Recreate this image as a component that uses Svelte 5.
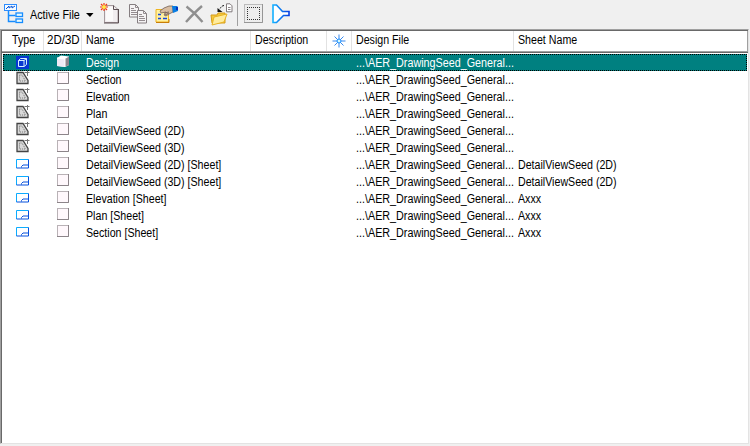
<script>
  const file = '...\\AER_DrawingSeed_General...';
  const rows = [
    { type: 'design', name: 'Design', sheet: '' },
    { type: 'drawing', name: 'Section', sheet: '' },
    { type: 'drawing', name: 'Elevation', sheet: '' },
    { type: 'drawing', name: 'Plan', sheet: '' },
    { type: 'drawing', name: 'DetailViewSeed (2D)', sheet: '' },
    { type: 'drawing', name: 'DetailViewSeed (3D)', sheet: '' },
    { type: 'sheet', name: 'DetailViewSeed (2D) [Sheet]', sheet: 'DetailViewSeed (2D)' },
    { type: 'sheet', name: 'DetailViewSeed (3D) [Sheet]', sheet: 'DetailViewSeed (2D)' },
    { type: 'sheet', name: 'Elevation [Sheet]', sheet: 'Axxx' },
    { type: 'sheet', name: 'Plan [Sheet]', sheet: 'Axxx' },
    { type: 'sheet', name: 'Section [Sheet]', sheet: 'Axxx' }
  ];
</script>

<div class="window">
  <header class="toolbar">
    <svg class="tree" width="22" height="22" viewBox="0 0 22 22" fill="none">
      <path d="M5.500 8v10.500h7M5.500 12.500h7" stroke="#168cff" stroke-width="1.500" />
      <rect x="1.500" y="1.500" width="12" height="6" fill="#f5fbff" stroke="#2b8cff" />
      <path d="M3 6l3-3v2l3-2v2l3-2" stroke="#0754d8" />
      <rect x="13" y="10" width="6.500" height="3.500" fill="#e5faff" stroke="#168cff" stroke-width="1.300" />
      <rect x="13" y="16" width="6.500" height="3.500" fill="#e5faff" stroke="#168cff" stroke-width="1.300" />
    </svg>
    <span class="active"><b>Active File</b></span>
    <svg class="drop" width="8" height="5"><path d="M0 0h7.500L4 4z" fill="#000" /></svg>
    <svg class="new" width="20" height="22" viewBox="0 0 20 22">
      <path d="M4.500 2.500h9l4.500 4v13H4.500z" fill="#f1edef" stroke="#a59a9d" />
      <path d="M6 4h7v14H6z" fill="#fff" opacity=".7" />
      <path d="M13.500 2.500v4H18M18.500 6v14H4" fill="none" stroke="#5c5054" />
      <path d="M4 0v8M0 4h8M1 1l6 6M7 1L1 7" stroke="#f03a18" stroke-width="1.200" />
      <circle cx="4" cy="4" r="2" fill="#ffe94a" />
    </svg>
    <svg class="copy" width="19" height="20" viewBox="0 0 19 20">
      {#each [[0, 0], [8, 6]] as [x, y]}
        <g transform={`translate(${x} ${y})`}>
          <path d="M.5.5h6l3 3v9.500H.5z" fill="#f5f3f4" stroke="#857e81" />
          <path d="M6.500.5v3h3M2 4.500h3M2 6.500h5M2 8.500h6M2 10.500h6" fill="none" stroke="#948c8f" />
        </g>
      {/each}
    </svg>
    <svg class="props" width="25" height="20" viewBox="0 0 25 20">
      <path d="M1 4.500h12.500V17H1z" fill="#fff0a0" stroke="#efb51f" />
      <path d="M3 9.500h3M3 13.500h3M8 13.500h4" stroke="#1748dd" stroke-width="1.300" />
      <path d="M1 17.500h13V14" fill="none" stroke="#c87d09" />
      <path d="M5 6l4-3 5-2h4v6l-4 2-3 2-2-1 2-3-5 1z" fill="#d8bda2" stroke="#735f54" stroke-width=".8" />
      <path d="M9 8l5-1M10 10l4-2" stroke="#7e6a5d" />
      <path d="M17 1h5l1 1v4l-5 2z" fill="#087ce2" /><path d="M21 2h2v3h-2z" fill="#0634bc" />
    </svg>
    <svg class="delete" width="19" height="19" viewBox="0 0 19 19">
      <path d="M1.500 1.500Q10 8 17.500 17M17 1Q10 7 1 17" fill="none" stroke="#8f8f8f" stroke-width="2.400" />
    </svg>
    <svg class="import" width="23" height="23" viewBox="0 0 23 23">
      <path d="M1 12h6l1-2h7v10H2z" fill="#f4c93c" stroke="#d69b18" />
      <path d="M4 14l13-3-3 8-12 3z" fill="#ffec9e" stroke="#e9b322" />
      <path d="M14 2.500Q11 3 10 6" fill="none" stroke="#151515" stroke-dasharray="2 1" />
      <path d="M7.500 9V5l5 4z" fill="#111" />
      <path d="M16.500.8h3.500l2 2v6h-5.500z" fill="#fff" stroke="#817a7c" /><path d="M18 4.500h2.500M18 6.500h2.500" stroke="#8b8588" />
    </svg>
    <i class="divider"></i>
    <svg class="fence" width="20" height="20" viewBox="0 0 20 20">
      <rect x=".5" y=".5" width="18" height="18" fill="#ededed" stroke="#bbb" />
      <path d="M0 18.500h18.500V0" fill="none" stroke="#969696" />
      <path d="M3 3.500h13M3 15.500h13M3.500 3v13M15.500 3v13" fill="none" stroke="#333" stroke-dasharray="1 1" shape-rendering="crispEdges" />
    </svg>
    <svg class="filter" width="19" height="21" viewBox="0 0 19 21">
      <defs><linearGradient id="blue"><stop stop-color="#13b1ff" /><stop offset="1" stop-color="#073ee1" /></linearGradient></defs>
      <path d="M1 1h3.500l6 6.500H17v4h-5.500L4.500 18.500H1z" fill="#fff" stroke="url(#blue)" stroke-width="1.600" />
    </svg>
  </header>

  <main>
    <div class="head grid">
      <span class="type-label"><b>Type</b></span><span class="dim"><b>2D/3D</b></span><span><b>Name</b></span><span><b>Description</b></span>
      <span class="mark">
        <svg width="14" height="14" viewBox="0 0 14 14"><path d="M7 .5v13M.5 7h13M2.500 2.500l9 9M11.500 2.500l-9 9" stroke="#3989ee" /><circle cx="7" cy="7" r="2" fill="#d6faff" stroke="#168cff" /></svg>
      </span>
      <span><b>Design File</b></span><span><b>Sheet Name</b></span>
    </div>
    <div class="rows">
      {#each rows as row, index}
        <div class="row grid" class:selected={index === 0}>
          <span class={`type ${row.type}`}>
            {#if row.type === 'design'}
              <svg width="13" height="13" viewBox="0 0 13 13"><path d="M0 0h13v13H0z" fill="#0637d2" /><path d="M2.500 4.500h5.500v6H2.500zM2.500 4.500l2-2h6v6L8 10.500M8 4.500l2.500-2" fill="none" stroke="#d6f0ff" /></svg>
            {:else if row.type === 'drawing'}
              <svg width="14" height="14" viewBox="0 0 14 14"><path d="M1 1.500h6l5 8v3H1z" fill="#d8d8d8" stroke="#444" stroke-width="1.300" /><path d="M3.500 4h2.500l3.500 6h-6z" fill="none" stroke="#777" stroke-dasharray="1 1" /><path d="M8.500 1.500h5M11.500 0v5" stroke="#777" /></svg>
            {:else}
              <svg width="13" height="10" viewBox="0 0 13 10"><path d="M.5 9V.5h12" fill="none" stroke="#0cacff" /><path d="M12.500.5v8.500H.5M5.500 8.500v-1l1.500-1.500h5" fill="none" stroke="#0750dc" /></svg>
            {/if}
          </span>
          <span class="model">
            {#if index === 0}
              <svg width="13" height="13" viewBox="0 0 13 13"><path d="M0 3l4-2.500 8 1V10l-4 2-8-1z" fill="#fff" /><path d="M8 4l4-2.500V10l-4 2z" fill="#8e858e" /><path d="M0 3l8 1v8L0 11z" fill="#eee9f5" /><path d="M0 3l8 1v8" fill="none" stroke="#fff" /></svg>
            {:else}
              <svg width="12" height="12" viewBox="0 0 12 12"><rect x=".5" y=".5" width="11" height="11" fill="#fff8fc" stroke="#b9b2b6" /><path d="M11.500 0v11.500H0" fill="none" stroke="#8c8489" /></svg>
            {/if}
          </span>
          <span><b>{row.name}</b></span><span></span><span></span>
          <span class="path"><b>{file}</b></span><span><b>{row.sheet}</b></span>
        </div>
      {/each}
    </div>
  </main>
</div>

<style>
  :global(body) { margin: 0; background: #f0f0f0; }
  .window { width: 750px; height: 446px; box-sizing: border-box; padding-right: 1px; background: #f0f0f0; color: #000; font: 12px/17px "Liberation Sans", Arial, sans-serif; display: flex; flex-direction: column; }
  svg { display: block; flex: none; }
  span { white-space: pre; }
  b { display: block; width: max-content; font-weight: normal; transform: scaleX(.887); transform-origin: left; }
  .toolbar { height: 29px; display: flex; align-items: flex-start; }
  .tree { margin: 3px 0 0 3px; }
  .active { margin: 7px 0 0 5px; width: 56px; }
  .active b { transform: scaleX(.9); }
  .drop { margin-top: 13px; }
  .new { margin: 3px 0 0 6px; }
  .copy { margin: 4px 0 0 9px; }
  .props { margin: 5px 0 0 7px; }
  .delete { margin: 5px 0 0 5px; }
  .import { margin: 3px 0 0 6px; }
  .divider { width: 1px; height: 26px; background: #a0a0a0; margin-left: 4px; }
  .fence { margin: 4px 0 0 6px; }
  .filter { margin: 4px 0 0 8px; }
  main { height: 415px; background: #fff; border-left: 1px solid #a0a0a0; border-top: 1px solid #a0a0a0; border-right: 1px solid #e3e3e3; border-bottom: 1px solid #e3e3e3; box-shadow: inset 1px 1px #696969; padding: 1px 0 0 1px; box-sizing: border-box; flex: none; }
  .grid { display: grid; grid-template-columns: 42px 38px 169px 76px 25px 162px 1fr; }
  .head { height: 22px; box-sizing: border-box; border-bottom: 1px solid #696969; box-shadow: inset 0 -1px #a0a0a0; }
  .head span { border-right: 1px solid #e2e2e2; padding: 1px 0 0 4px; margin-bottom: 1px; }
  .head span:last-child { border-right-color: #a0a0a0; }
  .head .type-label { padding-left: 10px; }
  .head .dim { padding-left: 3px; }
  .dim b { transform: scaleX(.96); }
  .head .mark { padding: 3px 0 0 5px; }
  .rows { margin-top: 1px; }
  .row { height: 17px; }
  .row > span { padding: 1px 0 0 4px; }
  .path b { transform: scaleX(.897); }
  .row .type { padding: 2px 0 0 14px; }
  .row .drawing { padding-top: 0; }
  .row .sheet { padding-top: 3px; }
  .row .model { padding: 1px 0 0 13px; }
  .selected { color: #fff; background: #008080; outline: 1px dotted #000; outline-offset: -1px; margin: 0 1px; grid-template-columns: 41px 38px 169px 76px 25px 162px 1fr; }
  .selected .type { padding-left: 13px !important; }
</style>
